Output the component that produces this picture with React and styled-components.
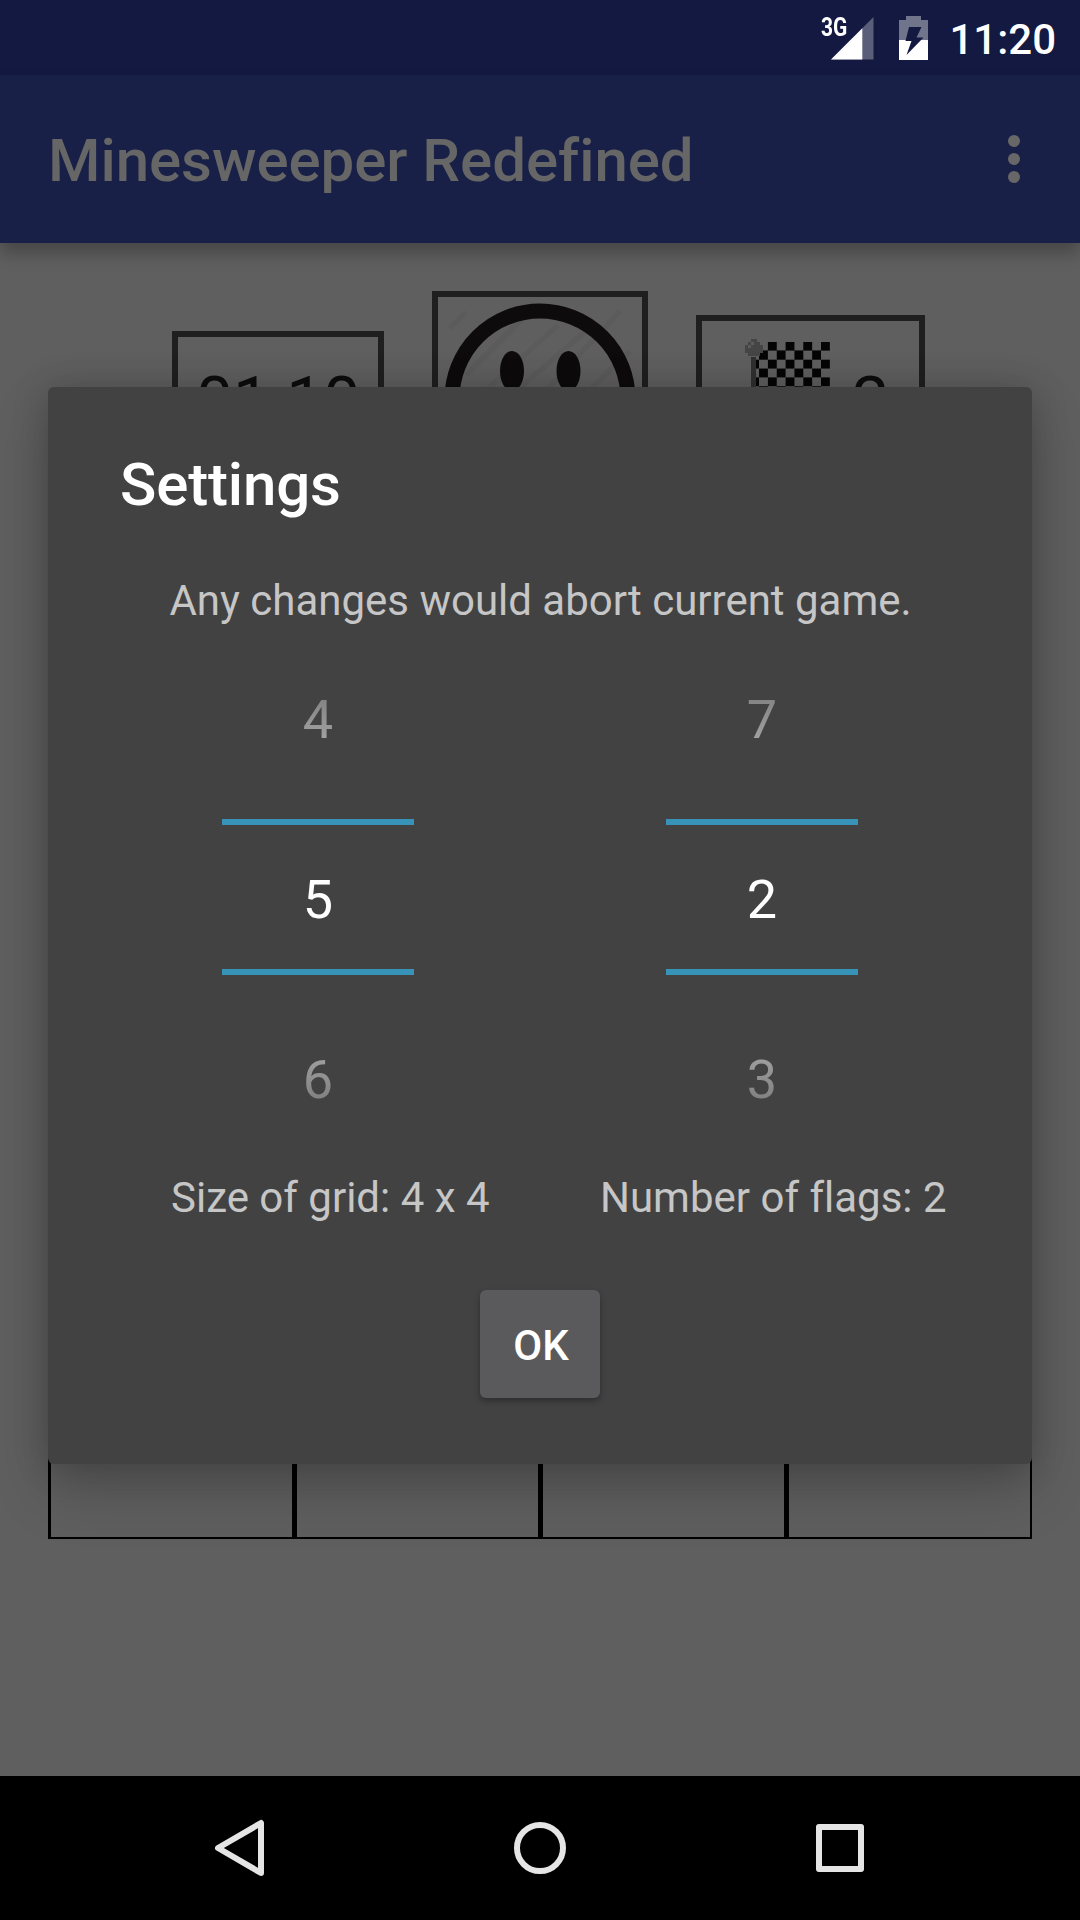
import React from "react";
import styled, { createGlobalStyle } from "styled-components";

const GlobalStyle = createGlobalStyle`
  * { box-sizing: border-box; }
  body {
    margin: 0;
    background: #000;
    font-family: Roboto, "Liberation Sans", sans-serif;
  }
`;

const Screen = styled.div`
  position: relative;
  display: flex;
  flex-direction: column;
  width: 1080px;
  height: 1920px;
  overflow: hidden;
  background: #5f5f5f;
`;

const StatusBar = styled.header`
  display: flex;
  justify-content: flex-end;
  align-items: center;
  height: 75px;
  padding-right: 24px;
  background: #131940;
  color: #fff;
`;

const Network = styled.div`
  display: flex;
  align-items: flex-start;
  height: 48px;
  margin-right: 25px;
`;

const NetworkType = styled.span`
  width: 10px;
  font-size: 25px;
  font-weight: 700;
  line-height: 28px;
  white-space: nowrap;
  transform: scaleX(0.84);
  transform-origin: left center;
`;

const Clock = styled.span`
  margin-left: 21px;
  padding-top: 4px;
  font-size: 42px;
  font-weight: 500;
  line-height: 50px;
`;

const AppBar = styled.div`
  z-index: 1;
  display: flex;
  justify-content: space-between;
  align-items: center;
  height: 168px;
  padding: 0 60px 0 48px;
  background: #192048;
  box-shadow: 0 10px 16px rgba(0, 0, 0, 0.26);
`;

const AppTitle = styled.h1`
  margin: 4px 0 0;
  font-size: 60px;
  font-weight: 500;
  line-height: 70px;
  letter-spacing: -0.05px;
  font-variant-ligatures: common-ligatures;
  color: #666;
`;

const Game = styled.main`
  display: flex;
  flex: 1;
  flex-direction: column;
  gap: 48px;
  padding: 48px;
`;

const Scoreboard = styled.div`
  display: flex;
  justify-content: center;
  align-items: center;
  gap: 48px;
  padding-left: 17px;
`;

const Panel = styled.div`
  display: flex;
  align-items: center;
  width: ${(p) => p.$width}px;
  height: ${(p) => p.$height}px;
  padding: 0 ${(p) => p.$pad || 0}px;
  border: 6px solid #1f1f1f;
`;

const Counter = styled.span`
  margin-left: ${(p) => p.$gap || 0}px;
  padding-top: 6px;
  font-size: 66px;
  line-height: 78px;
  color: #0d0d0d;
`;

const Board = styled.div`
  display: grid;
  grid-template-columns: repeat(4, 246px);
  grid-auto-rows: 246px;
`;

const Cell = styled.div`
  border: solid #000;
  border-width: 3px 2px 2px 3px;
`;

const NavBar = styled.nav`
  display: flex;
  justify-content: center;
  align-items: center;
  gap: 228px;
  height: 144px;
  background: #000;
`;

const Overlay = styled.div`
  position: absolute;
  inset: 75px 0 144px;
  z-index: 2;
  display: flex;
  justify-content: center;
  align-items: center;
`;

const Dialog = styled.section`
  display: flex;
  flex-direction: column;
  align-items: center;
  width: 984px;
  height: 1077px;
  border-radius: 6px;
  background: #424242;
  box-shadow: 0 26px 58px rgba(0, 0, 0, 0.2), 0 0 36px rgba(0, 0, 0, 0.18);
`;

const DialogTitle = styled.h2`
  align-self: stretch;
  margin: 63px 72px 0;
  font-size: 60px;
  font-weight: 500;
  line-height: 70px;
  letter-spacing: -0.15px;
  color: #fff;
`;

const Message = styled.p`
  margin: 56px 0 0;
  padding-left: 1px;
  font-size: 42px;
  line-height: 50px;
  color: #c6c6c6;
`;

const Pickers = styled.div`
  display: flex;
  gap: 252px;
  margin-top: 1px;
`;

const Picker = styled.div`
  display: grid;
  width: 192px;
  height: 540px;
`;

const Values = styled.div`
  grid-area: 1 / 1;
  display: flex;
  flex-direction: column;
  mask-image: linear-gradient(
    to bottom,
    rgba(0, 0, 0, 0.08),
    #000 243px,
    #000 297px,
    rgba(0, 0, 0, 0.08)
  );
`;

const Value = styled.span`
  height: 180px;
  font-size: 54px;
  line-height: 186px;
  text-align: center;
  color: #fff;
`;

const Selection = styled.div`
  grid-area: 1 / 1;
  align-self: start;
  height: 156px;
  margin-top: 192px;
  border: solid #3793b8;
  border-width: 6px 0;
`;

const Labels = styled.div`
  align-self: stretch;
  display: flex;
  padding-left: 123px;
  margin-top: 6px;
`;

const Label = styled.span`
  width: ${(p) => p.$width}px;
  font-size: 42px;
  font-variant-ligatures: none;
  line-height: 50px;
  white-space: nowrap;
  color: #c6c6c6;
`;

const OkButton = styled.button`
  width: 120px;
  height: 108px;
  margin-top: 67px;
  padding: 3px 0 0 2px;
  border: 0;
  border-radius: 6px;
  background: #5a5a5c;
  box-shadow: 0 3px 6px rgba(0, 0, 0, 0.32);
  font: 500 42px Roboto, "Liberation Sans", sans-serif;
  color: #fff;
`;

const SignalIcon = () => (
  <svg width="43" height="48" viewBox="0 0 43 48">
    <path d="M0 45.5 42.5 3v42.5z" fill="#5a5e79" />
    <path d="M0 45.5 31.3 14.2v31.3z" fill="#fff" />
  </svg>
);

const BatteryIcon = () => (
  <svg width="29" height="44" viewBox="0 0 29 44">
    <path d="M7 0h15v4h7v20H0V4h7z" fill="#71758c" />
    <path d="M0 24h29v20H0z" fill="#fff" />
    <path d="M10 11h12.5L17.5 21.5h7L7.5 39l5-14H6.5z" fill="#131940" />
  </svg>
);

const MoreIcon = () => (
  <svg width="12" height="48" viewBox="0 0 12 48">
    <circle cx="6" cy="6" r="6" fill="#676767" />
    <circle cx="6" cy="24" r="6" fill="#676767" />
    <circle cx="6" cy="42" r="6" fill="#676767" />
  </svg>
);

const SmileyIcon = () => (
  <svg width="204" height="204" viewBox="0 0 204 204">
    <path
      d="M12 31 28 15M28 78 90 16M36 104 120 28M48 120 150 32M80 124 182 14M120 124 192 54"
      stroke="#595959"
      strokeWidth="5"
      opacity="0.6"
      fill="none"
    />
    <circle cx="102" cy="102" r="88" fill="none" stroke="#0d0b0c" strokeWidth="15" />
    <ellipse cx="74" cy="74" rx="12" ry="20" fill="#0d0b0c" />
    <ellipse cx="130.5" cy="74" rx="12" ry="20" fill="#0d0b0c" />
    <path d="M56 130q46 42 92 0" fill="none" stroke="#0d0b0c" strokeWidth="10" />
  </svg>
);

const flagCells = [];
for (let row = 0; row < 6; row += 1) {
  for (let col = 0; col < 9; col += 1) {
    if ((row + col) % 2 === 0) flagCells.push([col, row]);
  }
}

const FlagIcon = () => (
  <svg width="112" height="120" viewBox="0 0 112 120">
    <path d="M33 18h5v92h-5z" fill="#303030" />
    {flagCells.map(([col, row]) => (
      <rect
        key={`${col}-${row}`}
        x={col === 0 ? 38 : 32.2 + col * 8.85}
        y={3 + row * 8.85}
        width={col === 0 ? 3 : 8.85}
        height="8.85"
        fill="#050505"
      />
    ))}
    <path d="M41 11.5h71" stroke="#282828" />
    <path d="M33 0h6v3h3v3h3v8h-3v3h-12v-3h-3v-8h3V3h3z" fill="#454545" />
    <path d="M33 3h3v3h-3zM30 6h3v3h-3z" fill="#5c5c5c" />
  </svg>
);

const BackIcon = () => (
  <svg width="72" height="72" viewBox="0 0 72 72">
    <path d="M57 11v50L14 36z" fill="none" stroke="#e5e5e5" strokeWidth="6" strokeLinejoin="round" />
  </svg>
);

const HomeIcon = () => (
  <svg width="72" height="72" viewBox="0 0 72 72">
    <circle cx="36" cy="36" r="23" fill="none" stroke="#e5e5e5" strokeWidth="6" />
  </svg>
);

const RecentsIcon = () => (
  <svg width="72" height="72" viewBox="0 0 72 72">
    <path
      fillRule="evenodd"
      d="M15 12h42q3 0 3 3v42q0 3-3 3H15q-3 0-3-3V15q0-3 3-3zM18 18v36h36V18z"
      fill="#e5e5e5"
    />
  </svg>
);

const NumberPicker = ({ values }) => (
  <Picker>
    <Values>
      {values.map((value) => (
        <Value key={value}>{value}</Value>
      ))}
    </Values>
    <Selection />
  </Picker>
);

export default function App() {
  return (
    <>
      <GlobalStyle />
      <Screen>
        <StatusBar>
          <Network>
            <NetworkType>3G</NetworkType>
            <SignalIcon />
          </Network>
          <BatteryIcon />
          <Clock>11:20</Clock>
        </StatusBar>
        <AppBar>
          <AppTitle>Minesweeper Redefined</AppTitle>
          <MoreIcon />
        </AppBar>
        <Game>
          <Scoreboard>
            <Panel $width={212} $height={136} $pad={18}>
              <Counter>01:10</Counter>
            </Panel>
            <Panel $width={216} $height={216}>
              <SmileyIcon />
            </Panel>
            <Panel $width={229} $height={168} $pad={16}>
              <FlagIcon />
              <Counter $gap={22}>2</Counter>
            </Panel>
          </Scoreboard>
          <Board>
            {Array.from({ length: 16 }, (_, i) => (
              <Cell key={i} />
            ))}
          </Board>
        </Game>
        <NavBar>
          <BackIcon />
          <HomeIcon />
          <RecentsIcon />
        </NavBar>
        <Overlay>
          <Dialog>
            <DialogTitle>Settings</DialogTitle>
            <Message>Any changes would abort current game.</Message>
            <Pickers>
              <NumberPicker values={[4, 5, 6]} />
              <NumberPicker values={[7, 2, 3]} />
            </Pickers>
            <Labels>
              <Label $width={429}>Size of grid: 4 x 4</Label>
              <Label $width={347}>Number of flags: 2</Label>
            </Labels>
            <OkButton>OK</OkButton>
          </Dialog>
        </Overlay>
      </Screen>
    </>
  );
}
